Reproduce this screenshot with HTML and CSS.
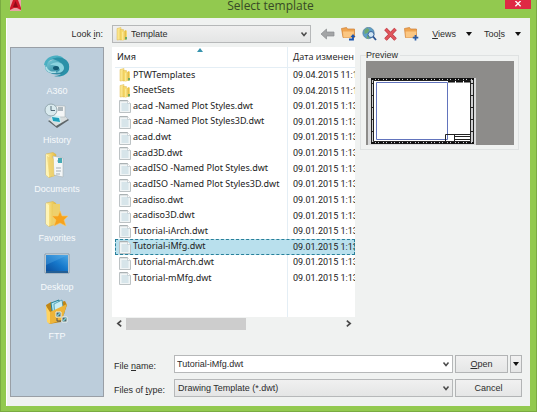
FILE: index.html
```html
<!DOCTYPE html>
<html lang="en">
<head>
<meta charset="utf-8">
<title>Select template</title>
<link rel="stylesheet" href="styles.css">
</head>
<body>
<svg class="defs" aria-hidden="true">
  <defs>
    <linearGradient id="gold" x1="0" x2="1"><stop offset="0" stop-color="#fff0a0"/><stop offset="1" stop-color="#e3b83c"/></linearGradient>
    <linearGradient id="screen" x1="0" y1="1" x2="1" y2="0"><stop offset="0" stop-color="#0b4f9e"/><stop offset=".5" stop-color="#1678cb"/><stop offset="1" stop-color="#4aa6e4"/></linearGradient>
    <linearGradient id="teal" x1="0" x2="1" y2="1"><stop offset="0" stop-color="#7ed0dc"/><stop offset="1" stop-color="#176f8c"/></linearGradient>
    <symbol id="folder" viewBox="0 0 12 14">
      <path d="M1 1.500 5 .5v12L1 13z" fill="#fbe58a" stroke="#dcb850" stroke-width=".5"/>
      <path d="M4 2.500h3.500v10.500H4z" fill="#f6d868" stroke="#d8b040" stroke-width=".4"/>
      <path d="M6 5 10 3v9.500L6 13.500z" fill="url(#gold)"/>
      <path d="M10 3.500h1V10h-1z" fill="#f4d876"/><path d="M9 10h2v2.500H9z" fill="#6fa860"/>
    </symbol>
    <symbol id="file" viewBox="0 0 12 14">
      <path d="M.5 1.500h8l3 3v9H.5z" fill="#f1f5f6" stroke="#bcc2c4"/>
      <path d="M2 1v1.500M4 1v1.500M6 1v1.500M8 1v1.500" stroke="#8c9598" stroke-width=".7"/>
      <path d="M8.500 1.500v3h3" fill="#fff" stroke="#b6bcbf" stroke-width=".6"/>
      <path d="M2.500 5h7M2.500 7h7M2.500 9h7M2.500 11h7" stroke="#bdd5de"/>
    </symbol>
    <symbol id="bigfolder" viewBox="0 0 24 26">
      <path d="M2 2 9 .5l3 2V23L5 25.500 2 23z" fill="url(#gold)" stroke="#d9b650" stroke-width=".6"/>
      <path d="M2 2 5 4v21.500L2 23z" fill="#fff4b4"/>
    </symbol>
    <symbol id="chev" viewBox="0 0 8 8"><path d="M1.500 2.500 4 5.500l2.500-3" fill="none" stroke="#4b4b4b" stroke-width="1.500"/></symbol>
    <symbol id="tri" viewBox="0 0 8 8"><path d="M1 2h6L4 6z" fill="#111"/></symbol>
  </defs>
</svg>

<div class="window">
  <header class="titlebar">
    <svg class="applogo" viewBox="0 0 11 11"><path d="M0 0h11v11H0z" fill="#e9a3a6"/><path d="M3 0h5l3 8v2L7 8H4l-4 2V8z" fill="#d0182a"/><path d="M5.500 1 8 7H3z" fill="#8f0d19"/></svg>
    <h1>Select template</h1>
    <button class="close" aria-label="Close"><svg viewBox="0 0 8 8"><path d="M1 0 7 6M7 0 1 6" stroke="#fff" stroke-width="1.500"/></svg></button>
  </header>

  <main class="dialog">
    <div class="toolbar">
      <label class="lookin" for="lookin">Look <u>i</u>n:</label>
      <div class="combo location">
        <select id="lookin"><option>Template</option></select>
        <svg class="lead"><use href="#folder"/></svg>
        <svg class="arrow"><use href="#chev"/></svg>
      </div>
      <div class="tools">
        <button aria-label="Back"><svg viewBox="0 0 14 14"><path d="M.5 7 6 2v3h7.500v4H6v3z" fill="#a3a5a6" stroke="#8b8e90" stroke-width=".7"/></svg></button>
        <button aria-label="Up one level"><svg viewBox="0 0 14 14"><path d="M0 1.500 5 .5l1 1.500h7v8.500H1.500z" fill="#efa551" stroke="#cf7f35" stroke-width=".7"/><path d="M1.500 4.500h11l-1 6H2z" fill="#fbc783"/><path d="M7.500 12.500h4V9" fill="none" stroke="#1b54ad" stroke-width="1.800"/><path d="M9 10 11.500 7 14 10z" fill="#1b54ad"/></svg></button>
        <button aria-label="Search the web"><svg viewBox="0 0 14 14"><circle cx="6" cy="6" r="5.700" fill="#5f9fc8" stroke="#4b7895" stroke-width=".6"/><path d="M2 3 5 1l2 2-2 3-3 1zM5 8l3 1-2 2.500H4z" fill="#6fa96f"/><circle cx="8.500" cy="7.500" r="3" fill="#cfe6f4" stroke="#38639b"/><path d="m10.500 9.500 3 3.500" stroke="#285391" stroke-width="1.800"/></svg></button>
        <button aria-label="Delete"><svg viewBox="0 0 14 14"><path d="m2 2 10 10.500M12 2 2 12.500" stroke="#b93a42" stroke-width="3.400"/><path d="m2 2 10 10.500M12 2 2 12.500" stroke="#e0565d" stroke-width="2.400"/></svg></button>
        <button aria-label="Create new folder"><svg viewBox="0 0 14 14"><path d="M0 1.500 5 .5l1 1.500h6v8.500H1z" fill="#efa551" stroke="#cf7f35" stroke-width=".7"/><path d="M1 4.500h11l-1 6H1.500z" fill="#fbc783"/><path d="M11 8v5.500M8.300 10.700h5.500" stroke="#2c5ca5" stroke-width="1.700"/></svg></button>
      </div>
      <div class="menus">
        <button><span><u>V</u>iews</span><svg><use href="#tri"/></svg></button>
        <button><span>Too<u>l</u>s</span><svg><use href="#tri"/></svg></button>
      </div>
    </div>

    <nav class="places">
      <a href="#a360"><svg viewBox="0 0 28 26"><ellipse cx="14" cy="13" rx="12" ry="7.500" fill="url(#teal)"/><path d="M1 11C2 3 12-1 19 3c3 2 1 3-2 3C9 4 4 7 4 12z" fill="#4aafc2"/><path d="M9 5c8-4 19 0 17 10-1 6-9 9-15 7 8 0 13-6 9-11-2-3-6-5-11-6z" fill="#2a91a8"/><path d="M7 11c5-5 14-3 14 3 0 4-5 6-9 4 4 0 6-2 4-4-2-3-6-3-9-3z" fill="#8bd3df"/><path d="M3 13c1 5 6 6 10 5" fill="none" stroke="#b0e0e8" stroke-width="1.500"/><ellipse cx="13" cy="14" rx="3" ry="2" fill="#145b74"/></svg>A360</a>
      <a href="#history"><svg viewBox="0 0 28 26"><path d="m5 18 14-7 7 6-12 8z" fill="#5e6669"/><path d="m5 16 13-6 7 6-12 7z" fill="#d9dedf"/><path d="M11 3h11v11H11z" fill="#f4f6f6" stroke="#a9b2b5" stroke-width=".6"/><path d="M15 5h5M15 7h5" stroke="#687b84"/><path d="m8 12 9 1 1 7-9-2z" fill="#d0f0f4"/><path d="m9 14 7 1 1 4-7-1z" fill="#20a2bd"/><circle cx="8" cy="7" r="6" fill="#d9eaee" stroke="#95a9b1"/><path d="M8 3v4.500h4" fill="none" stroke="#546c78"/></svg>History</a>
      <a href="#documents"><svg viewBox="0 0 28 26"><use href="#bigfolder" x="1" width="24" height="26"/><path d="m10 4 10 2v19l-9-2z" fill="#f4f7f8" stroke="#a9b1b6" stroke-width=".6"/><path d="M14 9h4M13 16h5M13 19h5M13 22h4" stroke="#a3adb3"/><path d="M15 6h4v5h-4z" fill="#45aab5"/><path d="M4 4 11 7v18l-5-2z" fill="#eed273" opacity=".8"/></svg>Documents</a>
      <a href="#favorites"><svg viewBox="0 0 28 26"><use href="#bigfolder" x="1" width="24" height="26"/><path d="M10 3h7v19l-8 2z" fill="#eed06c"/><path d="m17 10 2 5 6 0-4 4 2 6-6-3-6 3 2-6-4-4 6 0z" fill="#f6a21d" stroke="#fac961" stroke-width=".6"/></svg>Favorites</a>
      <a href="#desktop"><svg viewBox="0 0 28 26"><path d="M2 4h24v19H2z" fill="#e8f0f4" stroke="#8999a6"/><path d="M3 5h22v16H3z" fill="url(#screen)"/><path d="M3 5h22L3 15z" fill="#6bb9ee" opacity=".3"/><path d="M3 21h22v2H3z" fill="#245f95"/></svg>Desktop</a>
      <a href="#ftp"><svg viewBox="0 0 28 26"><path d="m3 6 5-3 2 2 12-3 2 4-6 17-12 2z" fill="#c08617"/><path d="m8 4 8-3 1 14-7 3z" fill="#aee4ef" stroke="#27839b"/><path d="m11 5 8-4 2 14-9 4z" fill="#c8edf4" stroke="#348da5" stroke-width=".7"/><path d="m7 13 17-8-5 16-12 4z" fill="#edb439"/><path d="m3 7 4 6v12l-3-2z" fill="#ffd463"/><path d="M13 13h5v5h-5zM19 18h5v5h-5z" fill="#4b6067" stroke="#e7f2ef"/><path d="m14 17 3-3M20 22l3-3" stroke="#79ccd2" stroke-width="1.500"/><path d="M14 19v3h4" fill="none" stroke="#555"/></svg>FTP</a>
    </nav>

    <section class="browser">
      <div class="listing">
        <div class="viewport">
          <table>
            <colgroup><col class="name"><col class="date"></colgroup>
            <thead><tr><th>Имя<svg class="sort" viewBox="0 0 6 4"><path d="M0 4 3 0l3 4z" fill="#3793ad"/></svg></th><th>Дата изменен</th></tr></thead>
            <tbody>
              <tr><td><svg><use href="#folder"/></svg>PTWTemplates</td><td>09.04.2015 11:1</td></tr>
              <tr><td><svg><use href="#folder"/></svg>SheetSets</td><td>09.04.2015 11:1</td></tr>
              <tr><td><svg><use href="#file"/></svg>acad -Named Plot Styles.dwt</td><td>09.01.2015 1:13</td></tr>
              <tr><td><svg><use href="#file"/></svg>acad -Named Plot Styles3D.dwt</td><td>09.01.2015 1:13</td></tr>
              <tr><td><svg><use href="#file"/></svg>acad.dwt</td><td>09.01.2015 1:13</td></tr>
              <tr><td><svg><use href="#file"/></svg>acad3D.dwt</td><td>09.01.2015 1:13</td></tr>
              <tr><td><svg><use href="#file"/></svg>acadISO -Named Plot Styles.dwt</td><td>09.01.2015 1:13</td></tr>
              <tr><td><svg><use href="#file"/></svg>acadISO -Named Plot Styles3D.dwt</td><td>09.01.2015 1:13</td></tr>
              <tr><td><svg><use href="#file"/></svg>acadiso.dwt</td><td>09.01.2015 1:13</td></tr>
              <tr><td><svg><use href="#file"/></svg>acadiso3D.dwt</td><td>09.01.2015 1:13</td></tr>
              <tr><td><svg><use href="#file"/></svg>Tutorial-iArch.dwt</td><td>09.01.2015 1:13</td></tr>
              <tr class="selected"><td><svg><use href="#file"/></svg>Tutorial-iMfg.dwt</td><td>09.01.2015 1:13</td></tr>
              <tr><td><svg><use href="#file"/></svg>Tutorial-mArch.dwt</td><td>09.01.2015 1:13</td></tr>
              <tr><td><svg><use href="#file"/></svg>Tutorial-mMfg.dwt</td><td>09.01.2015 1:13</td></tr>
            </tbody>
          </table>
        </div>
        <div class="scrollbar">
          <button aria-label="Scroll left"><svg class="left"><use href="#chev"/></svg></button>
          <div class="track"><div class="thumb"></div></div>
          <button aria-label="Scroll right"><svg class="right"><use href="#chev"/></svg></button>
        </div>
      </div>
      <fieldset class="preview">
        <legend>Preview</legend>
        <svg viewBox="0 0 148 84">
          <path d="M0 0h148v84H0z" fill="#8d8c8a"/>
          <path d="M2 17h108v67H2z" fill="#d9dadb"/>
          <path d="M5.500 17.500h102v65h-102z" fill="#cfd0d2" stroke="#222"/>
          <path d="M5 18h103M5 82h103" stroke="#111" stroke-width="2" stroke-dasharray="4 1 2 1"/>
          <path d="M6.500 22v60M106.500 22v60" stroke="#222" stroke-width="3" stroke-dasharray="1 11"/>
          <path d="M7.500 19.500h97v61h-97z" fill="#fff" stroke="#222"/>
          <path d="M10.500 21.500h71v57h-71z" fill="#fff" stroke="#6274bd"/>
          <path d="M82 20.500h22" stroke="#111" stroke-width="2" stroke-dasharray="7 1"/>
          <path d="M79.500 73.500h25v7h-25zM88.500 73v8M89 75.500h15M89 78.500h15" fill="none" stroke="#222"/>
        </svg>
      </fieldset>
    </section>

    <form class="fields">
      <label for="filename">File <u>n</u>ame:</label>
      <div class="combo">
        <input id="filename" type="text" value="Tutorial-iMfg.dwt">
        <svg class="arrow"><use href="#chev"/></svg>
      </div>
      <div class="actions">
        <button type="button"><span><u>O</u>pen</span></button>
        <button type="button" class="split" aria-label="Open options"><svg><use href="#tri"/></svg></button>
      </div>
      <label for="filetype">Files of <u>t</u>ype:</label>
      <div class="combo">
        <select id="filetype"><option>Drawing Template (*.dwt)</option></select>
        <svg class="arrow"><use href="#chev"/></svg>
      </div>
      <div class="actions cancel"><button type="button">Cancel</button></div>
    </form>
  </main>
</div>
</body>
</html>
```
FILE: styles.css
```css
* { box-sizing: border-box; }
body {
  margin: 0;
  background: #fff;
  color: #2c2c2c;
  font: 9px/12px "Liberation Sans", sans-serif;
}
svg { display: block; flex: none; }
.defs { position: absolute; width: 0; height: 0; }
button, input, select { font: inherit; color: inherit; margin: 0; }
button { padding: 0; border: 0; background: none; }

.window {
  display: flex;
  flex-direction: column;
  min-height: 100vh;
  margin-right: 2px;
  padding: 0 6px 5px 5px;
  background: #92c94f;
  border: solid #7aab42;
  border-width: 0 1px 1px;
}
.titlebar {
  display: grid;
  grid-template-columns: 26px 1fr 26px;
  align-items: start;
  height: 18px;
  margin-right: -1px;
  padding-left: 4px;
}
.applogo { width: 11px; height: 11px; }
h1 {
  margin: 0;
  color: #374a26;
  font: 12px/12px "Open Sans", sans-serif;
  text-align: center;
}
.close {
  display: grid;
  place-items: center;
  height: 9px;
  background: #df2944;
}
.close svg { width: 8px; height: 7px; }

.dialog {
  flex: 1;
  display: grid;
  grid-template-columns: 94px minmax(0, 1fr);
  grid-template-rows: 18px minmax(0, 1fr) auto;
  column-gap: 8px;
  padding: 7px 8px 9px 3px;
  background: #f0f2f1;
  border-left: 1px solid #fff;
}
.toolbar {
  grid-column: 1 / -1;
  display: flex;
  align-items: center;
}
.lookin { width: 102px; padding-right: 9px; text-align: right; }
.combo { position: relative; display: grid; }
.combo select, .combo input {
  appearance: none;
  width: 100%;
  height: 18px;
  padding: 0 16px 0 3px;
  border: 1px solid #b6b8b9;
  border-radius: 0;
  background: linear-gradient(#f0f0f0, #e4e5e5);
  outline: 0;
}
.combo input { padding: 0 16px 0 2px; background: #fff; }
.combo .arrow { position: absolute; right: 3px; top: 5px; width: 8px; height: 8px; pointer-events: none; }
.location { flex: 1; }
.combo.location select { padding-left: 18px; }
.combo .lead { position: absolute; left: 4px; top: 2px; width: 12px; height: 14px; pointer-events: none; }
.tools { display: flex; gap: 6px; padding-left: 9px; }
.tools svg { width: 15px; height: 14px; }
.menus { display: flex; gap: 11px; padding-left: 13px; }
.menus button { display: flex; align-items: center; gap: 9px; }
.menus svg { width: 8px; height: 8px; }

.places {
  grid-row: 2 / 4;
  margin-top: 4px;
  padding-top: 6px;
  background: #bccddb;
  border: 1px solid #999fa6;
}
.places a {
  display: flex;
  flex-direction: column;
  align-items: center;
  gap: 5px;
  height: 49px;
  color: #f7fafc;
  text-decoration: none;
}
.places svg { width: 28px; height: 26px; }

.browser { display: flex; gap: 5px; margin-top: 4px; padding-right: 3px; }
.listing { flex: 1; display: flex; flex-direction: column; min-width: 0; }
.viewport {
  flex: 1;
  overflow: hidden;
  padding-left: 3px;
  background: linear-gradient(#e4eef5, #e4eef5) 175px 0 / 1px 100% no-repeat #fff;
  color: #222;
  font: 9px/12px "Noto Sans", sans-serif;
}
table { width: 100%; height: 239px; table-layout: fixed; border-collapse: collapse; }
.name { width: 173px; }
thead tr { height: 20px; }
th, td { padding: 0; line-height: 12px; white-space: nowrap; text-align: left; font-weight: 400; }
th { border-bottom: 1px solid #e4eef5; position: relative; }
th:first-child { padding-left: 2px; }
th:last-child, td:last-child { padding-left: 5px; }
th:last-child { font-family: "Open Sans", sans-serif; }
td:last-child { font-family: Roboto, sans-serif; }
.sort { position: absolute; left: 82px; top: 1px; width: 6px; height: 4px; }
td svg { display: inline-block; width: 12px; height: 14px; margin: 0 2px 0 4px; vertical-align: middle; }
td { height: 15px; line-height: 14px; }
.selected { background: #b9e0ed; outline: 1px dashed #28809b; outline-offset: -1px; }
.scrollbar { display: flex; align-items: center; height: 13px; }
.scrollbar button { display: grid; place-items: center; width: 14px; }
.scrollbar svg { width: 9px; height: 9px; }
.left { transform: rotate(90deg); }
.right { transform: rotate(-90deg); }
.track { flex: 1; height: 12px; }
.thumb { width: 56%; height: 100%; background: #cdcdcd; }
.preview {
  align-self: start;
  flex: 0 0 159px;
  min-width: 0;
  margin: 2px 0 0;
  padding: 0 4px 4px 5px;
  border: 1px solid #dfe2e2;
}
.preview legend { padding: 0 2px 0 0; line-height: 12px; }
.preview svg { width: 100%; height: auto; }

.fields {
  display: grid;
  grid-template-columns: 60px minmax(0, 1fr) 67px;
  gap: 6px 2px;
  align-items: center;
  padding-top: 25px;
}
.fields label { padding: 4px 0 0 2px; }
.actions { display: flex; gap: 2px; }
.actions button {
  flex: 1;
  display: grid;
  place-items: center;
  height: 18px;
  background: linear-gradient(#f1f1f1, #e5e6e6);
  border: 1px solid #b2b4b5;
}
.actions .split { flex: 0 0 12px; }
.actions svg { width: 8px; height: 8px; }
```
